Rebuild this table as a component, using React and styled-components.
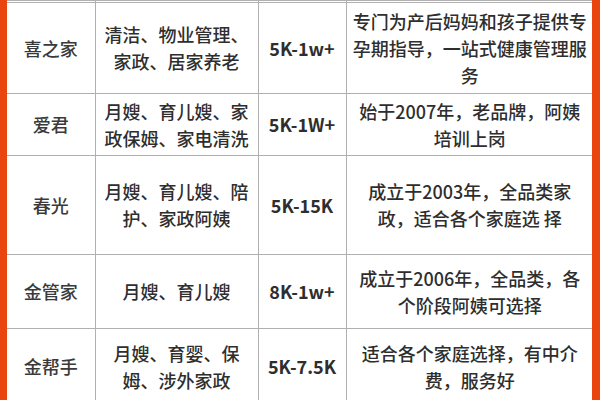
import React from "react";
import styled, { createGlobalStyle } from "styled-components";

const GlobalStyle = createGlobalStyle`
  html, body {
    margin: 0;
    padding: 0;
    background: #ffffff;
    overflow: hidden;
  }
  body {
    font-family: "Noto Sans CJK SC", "Noto Sans", sans-serif;
  }
`;

const Frame = styled.div`
  width: 600px;
  height: 400px;
  box-sizing: border-box;
  background: #e8450f;
  padding: 0 8px 0 7px;
  overflow: hidden;
`;

const Sheet = styled.div`
  background: #ffffff;
  height: 100%;
  overflow: hidden;
`;

const Table = styled.table`
  width: 586px;
  border-collapse: collapse;
  table-layout: fixed;
  color: #2e2e2e;
  font-size: 18px;
  line-height: 27px;
`;

const Row = styled.tr`
  height: ${(p) => p.h}px;
`;

const Cell = styled.td`
  border: 1.5px solid #b0b0b0;
  text-align: center;
  vertical-align: middle;
  padding: 0 4px;
  font-weight: ${(p) => (p.bold ? 700 : 500)};
  color: ${(p) => (p.muted ? "#3a3a3a" : "#2e2e2e")};
  &:first-child {
    border-left: none;
  }
  &:last-child {
    border-right: none;
    padding: 0 6px;
  }
`;

const rows = [
  {
    name: "喜之家",
    services: "清洁、物业管理、家政、居家养老",
    price: "5K-1w+",
    desc: "专门为产后妈妈和孩子提供专孕期指导，一站式健康管理服务",
    h: 91,
  },
  {
    name: "爱君",
    services: "月嫂、育儿嫂、家政保姆、家电清洗",
    price: "5K-1W+",
    desc: "始于2007年，老品牌，阿姨培训上岗",
    h: 62,
  },
  {
    name: "春光",
    services: "月嫂、育儿嫂、陪护、家政阿姨",
    price: "5K-15K",
    desc: "成立于2003年，全品类家政，适合各个家庭选 择",
    h: 99,
  },
  {
    name: "金管家",
    services: "月嫂、育儿嫂",
    price: "8K-1w+",
    desc: "成立于2006年，全品类，各个阶段阿姨可选择",
    h: 74,
  },
  {
    name: "金帮手",
    services: "月嫂、育婴、保姆、涉外家政",
    price: "5K-7.5K",
    desc: "适合各个家庭选择，有中介费，服务好",
    h: 76,
  },
];

export default function App() {
  return (
    <>
      <GlobalStyle />
      <Frame>
        <Sheet>
          <Table>
            <colgroup>
              <col style={{ width: 88 }} />
              <col style={{ width: 163 }} />
              <col style={{ width: 88 }} />
              <col style={{ width: 247 }} />
            </colgroup>
            <tbody>
              <Row h={2}>
                <Cell />
                <Cell />
                <Cell />
                <Cell />
              </Row>
              {rows.map((r) => (
                <Row key={r.name} h={r.h}>
                  <Cell muted>{r.name}</Cell>
                  <Cell>{r.services}</Cell>
                  <Cell bold>{r.price}</Cell>
                  <Cell>{r.desc}</Cell>
                </Row>
              ))}
            </tbody>
          </Table>
        </Sheet>
      </Frame>
    </>
  );
}
